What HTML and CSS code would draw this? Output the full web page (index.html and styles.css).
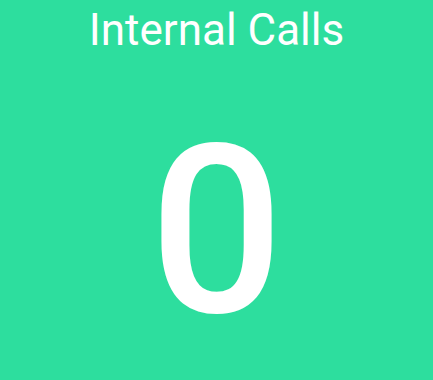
FILE: index.html
```html
<!DOCTYPE html>
<html lang="en">
<head>
    <meta charset="UTF-8">
    <meta name="viewport" content="width=device-width, initial-scale=1.0">
    <title>Internal Calls</title>
    <link rel="stylesheet" href="styles.css">
</head>
<body>
    <div class="tile">
        <div class="tile-title">Internal Calls</div>
        <div class="tile-value">0</div>
    </div>
</body>
</html>
```

FILE: styles.css
```css
body {
    margin: 0;
    padding: 0;
    font-family: Roboto, "Liberation Sans", sans-serif;
    background: #2dde9e;
    height: 100vh;
    overflow: hidden;
}

.tile {
    display: flex;
    flex-direction: column;
    align-items: center;
    color: #fff;
}

.tile-title {
    font-size: 44px;
    line-height: 60px;
}

.tile-value {
    font-size: 236px;
    font-weight: 500;
    line-height: 1;
    margin-top: 54px;
}
```
